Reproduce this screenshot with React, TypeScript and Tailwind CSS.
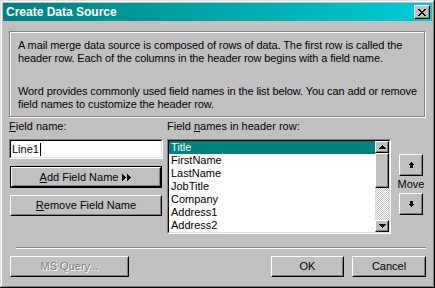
import React from 'react';

const raised =
  'border border-t-white border-l-white border-r-black border-b-black';
const raisedInner =
  'border border-t-[#c0c0c0] border-l-[#c0c0c0] border-r-[#808080] border-b-[#808080]';

function Button({
  className = '',
  isDefault = false,
  children,
}: {
  className?: string;
  isDefault?: boolean;
  children: React.ReactNode;
}) {
  const body = (
    <div className={`${raised} w-full h-full bg-[#c0c0c0]`}>
      <div className={`${raisedInner} w-full h-full flex items-center justify-center`}>
        {children}
      </div>
    </div>
  );
  if (isDefault) {
    return <div className={`border border-black ${className}`}>{body}</div>;
  }
  return <div className={className}>{body}</div>;
}

function Sunken({ className = '', children }: { className?: string; children: React.ReactNode }) {
  return (
    <div className={`border border-t-[#808080] border-l-[#808080] border-r-white border-b-white ${className}`}>
      <div className="border border-t-black border-l-black border-r-[#dfdfdf] border-b-[#dfdfdf] w-full h-full bg-white flex">
        {children}
      </div>
    </div>
  );
}

function CloseGlyph() {
  const rows = ['11000011', '01100110', '00111100', '00011000', '00111100', '01100110', '11000011'];
  return (
    <svg width="8" height="7" shapeRendering="crispEdges">
      {rows.flatMap((r, y) =>
        r.split('').map((c, x) => (c === '1' ? <rect key={`${x}-${y}`} x={x} y={y} width="1" height="1" fill="#000" /> : null))
      )}
    </svg>
  );
}

function ScrollArrow({ up }: { up: boolean }) {
  return (
    <svg width="7" height="4" shapeRendering="crispEdges">
      {up ? (
        <>
          <rect x="3" y="0" width="1" height="1" />
          <rect x="2" y="1" width="3" height="1" />
          <rect x="1" y="2" width="5" height="1" />
          <rect x="0" y="3" width="7" height="1" />
        </>
      ) : (
        <>
          <rect x="0" y="0" width="7" height="1" />
          <rect x="1" y="1" width="5" height="1" />
          <rect x="2" y="2" width="3" height="1" />
          <rect x="3" y="3" width="1" height="1" />
        </>
      )}
    </svg>
  );
}

function MoveArrow({ up }: { up: boolean }) {
  return (
    <svg width="5" height="6" shapeRendering="crispEdges">
      {up ? (
        <>
          <rect x="2" y="0" width="1" height="1" />
          <rect x="1" y="1" width="3" height="1" />
          <rect x="0" y="2" width="5" height="1" />
          <rect x="1" y="3" width="3" height="3" />
        </>
      ) : (
        <>
          <rect x="1" y="0" width="3" height="3" />
          <rect x="0" y="3" width="5" height="1" />
          <rect x="1" y="4" width="3" height="1" />
          <rect x="2" y="5" width="1" height="1" />
        </>
      )}
    </svg>
  );
}

function DoubleRight() {
  return (
    <svg width="10" height="7" shapeRendering="crispEdges" className="ml-[4px]">
      {[0, 5].map((o) => (
        <g key={o}>
          <rect x={o} y="0" width="1" height="7" />
          <rect x={o + 1} y="1" width="1" height="5" />
          <rect x={o + 2} y="2" width="1" height="3" />
          <rect x={o + 3} y="3" width="1" height="1" />
        </g>
      ))}
    </svg>
  );
}

const fields = ['Title', 'FirstName', 'LastName', 'JobTitle', 'Company', 'Address1', 'Address2'];

export default function App() {
  return (
    <div className="w-[435px] h-[288px] bg-[#c0c0c0] p-[3px] flex flex-col text-[11px] leading-[13px] text-black font-['Liberation_Sans',Arial,sans-serif] shadow-[inset_-1px_-1px_#000,inset_1px_1px_#dfdfdf,inset_-2px_-2px_#808080,inset_2px_2px_#fff]">
      <div className="h-[18px] flex items-center justify-between pl-[3px] pr-[2px] bg-gradient-to-r from-[#008080] to-[#00cdd5]">
        <span className="text-white font-bold text-[12px]">Create Data Source</span>
        <Button className="w-[16px] h-[14px]">
          <CloseGlyph />
        </Button>
      </div>

      <div className="flex-1 flex flex-col px-[6px]">
        <div className="mt-[10px] w-[416px] h-[86px] border border-[#808080] shadow-[1px_1px_0_#fff,inset_1px_1px_0_#fff] pl-[8px] pt-[7px] tracking-[-0.1px] whitespace-nowrap">
          <p>
            A mail merge data source is composed of rows of data. The first row is called the
            <br />
            header row. Each of the columns in the header row begins with a field name.
          </p>
          <p className="mt-[20px]">
            Word provides commonly used field names in the list below. You can add or remove
            <br />
            field names to customize the header row.
          </p>
        </div>

        <div className="mt-[3px] flex">
          <div className="w-[154px] flex flex-col">
            <div className="h-[13px]">
              <u>F</u>ield name:
            </div>
            <Sunken className="mt-[6px] h-[20px]">
              <div className="flex items-center pl-[1px]">
                <span>Line1</span>
                <span className="w-px h-[13px] bg-black ml-[1px]" />
              </div>
            </Sunken>
            <Button isDefault className="mt-[7px] ml-[1px] w-[152px] h-[22px]">
              <span>
                <u>A</u>dd Field Name
              </span>
              <DoubleRight />
            </Button>
            <Button className="mt-[7px] ml-[1px] w-[152px] h-[21px]">
              <span>
                <u>R</u>emove Field Name
              </span>
            </Button>
          </div>

          <div className="ml-[4px] w-[224px] flex flex-col">
            <div className="h-[13px]">
              Field <u>n</u>ames in header row:
            </div>
            <Sunken className="mt-[6px] h-[95px]">
              <div className="flex-1 flex flex-col">
                {fields.map((f, i) => (
                  <div
                    key={f}
                    className={`h-[13px] pl-[2px] ${i === 0 ? 'bg-[#008080] text-white' : ''}`}
                  >
                    {f}
                  </div>
                ))}
              </div>
              <div className="w-[14px] flex flex-col bg-[#c0c0c0]">
                <Button className="w-[14px] h-[12px]">
                  <ScrollArrow up />
                </Button>
                <Button className="w-[14px] h-[35px]">
                  <span />
                </Button>
                <div className="flex-1 bg-[image:repeating-conic-gradient(#c0c0c0_0%_25%,#ffffff_0%_50%)] bg-[length:2px_2px]" />
                <Button className="w-[14px] h-[12px]">
                  <ScrollArrow up={false} />
                </Button>
              </div>
            </Sunken>
          </div>

          <div className="ml-[8px] w-[24px] pt-[34px] flex flex-col items-center">
            <Button className="w-[24px] h-[22px]">
              <MoveArrow up />
            </Button>
            <div className="mt-[2px] h-[13px]">Move</div>
            <Button className="mt-[2px] w-[24px] h-[22px]">
              <MoveArrow up={false} />
            </Button>
          </div>
        </div>

        <div className="mt-[13px] ml-[7px] w-[410px] h-[2px] border-t border-t-[#808080] border-b border-b-white" />

        <div className="mt-[7px] flex">
          <Button className="ml-[1px] w-[119px] h-[21px]">
            <span className="text-[#808080] [text-shadow:1px_1px_0_#fff]">MS Query...</span>
          </Button>
          <div className="flex-1" />
          <Button className="w-[73px] h-[21px]">
            <span>OK</span>
          </Button>
          <Button className="ml-[8px] w-[74px] h-[21px]">
            <span>Cancel</span>
          </Button>
        </div>
      </div>
    </div>
  );
}
